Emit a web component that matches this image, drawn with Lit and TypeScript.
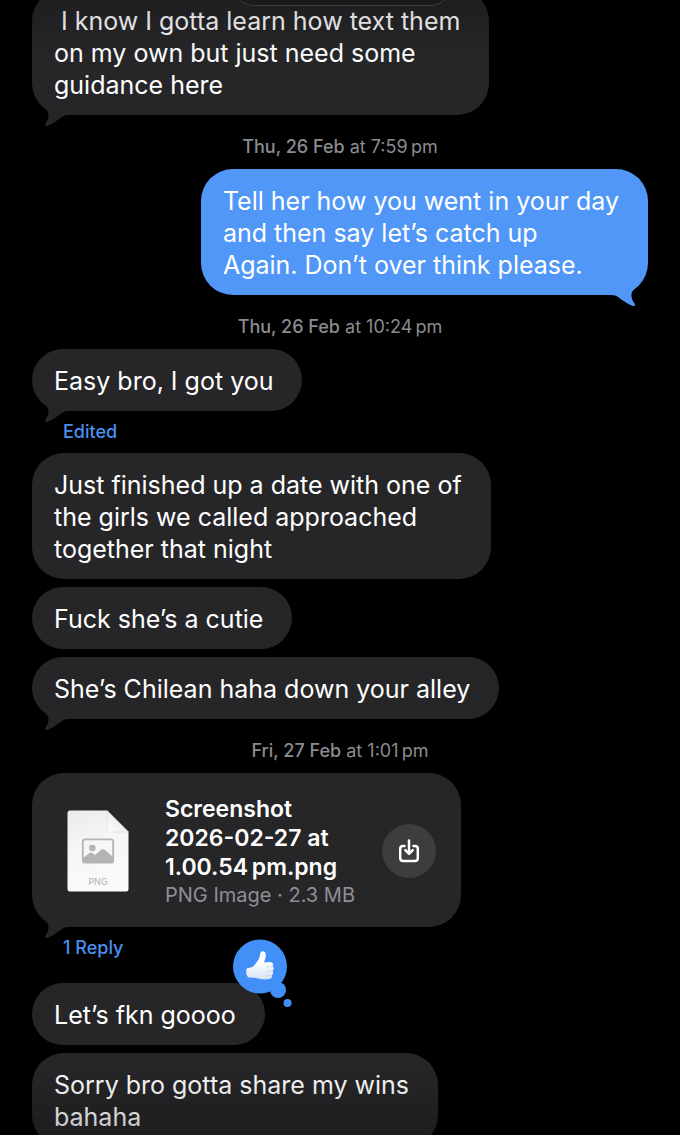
import { LitElement, html, css, svg, nothing } from "lit";
import { customElement, property } from "lit/decorators.js";

type Item =
  | { kind: "date"; day: string; time: string }
  | { kind: "text"; text: string; mine?: boolean; tail?: boolean; liked?: boolean }
  | { kind: "file"; name: string; info: string; tail?: boolean }
  | { kind: "note"; label: string };

const THREAD: Item[] = [
  { kind: "text", text: " I know I gotta learn how text them\non my own but just need some\nguidance here", tail: true },
  { kind: "date", day: "Thu, 26 Feb", time: "at 7:59\u202fpm" },
  { kind: "text", text: "Tell her how you went in your day\nand then say let’s catch up\nAgain. Don’t over think please.", mine: true, tail: true },
  { kind: "date", day: "Thu, 26 Feb", time: "at 10:24\u202fpm" },
  { kind: "text", text: "Easy bro, I got you", tail: true },
  { kind: "note", label: "Edited" },
  { kind: "text", text: "Just finished up a date with one of\nthe girls we called approached\ntogether that night" },
  { kind: "text", text: "Fuck she’s a cutie" },
  { kind: "text", text: "She’s Chilean haha down your alley", tail: true },
  { kind: "date", day: "Fri, 27 Feb", time: "at 1:01\u202fpm" },
  { kind: "file", name: "Screenshot\n2026-02-27 at\n1.00.54\u202fpm.png", info: "PNG Image · 2.3 MB", tail: true },
  { kind: "note", label: "1 Reply" },
  { kind: "text", text: "Let’s fkn goooo", liked: true },
  { kind: "text", text: "Sorry bro gotta share my wins\nbahaha" },
];

@customElement("chat-bubble")
export class ChatBubble extends LitElement {
  @property({ type: Boolean, reflect: true }) mine = false;
  @property({ type: Boolean }) tail = false;
  @property({ type: Boolean, reflect: true }) liked = false;
  @property({ type: Boolean, reflect: true }) file = false;

  static styles = css`
    :host {
      position: relative;
      display: block;
      box-sizing: border-box;
      align-self: flex-start;
      max-width: 80%;
      padding: 16px 29px 14px 22px;
      border-radius: 32px;
      background: var(--bubble);
      color: #fff;
      --bubble: #262629;
    }
    :host([mine]) {
      align-self: flex-end;
      --bubble: #5097f8;
    }
    :host([liked]) {
      margin-top: 14px;
    }
    :host([file]) {
      padding: 20px 25px 18px 35px;
    }
    .tail {
      position: absolute;
      left: 0;
      bottom: -12px;
      width: 40px;
      height: 24px;
      fill: var(--bubble);
    }
    :host([mine]) .tail {
      left: auto;
      right: 0;
      transform: scaleX(-1);
    }
    .reaction {
      position: absolute;
      right: -28px;
      top: -44px;
      width: 60px;
      height: 70px;
      padding: 0;
      border: 0;
      background: none;
    }
  `;

  render() {
    return html`
      ${this.tail
        ? html`<svg class="tail" viewBox="0 -12 40 24" aria-hidden="true">
            <path d="M11 -9C14 -5 17 -4 16.500 1C16 5 15 6.500 13.300 8.800C12.400 10.300 13 11.300 15 10.900C22 9 27 3.500 32 0.800Q34 0 37 0L30 -8Z" />
          </svg>`
        : nothing}
      <slot></slot>
      ${this.liked
        ? html`<button class="reaction" aria-label="Liked">
            <svg width="60" height="70" viewBox="0 0 60 70">
              <defs>
                <linearGradient id="hand" x1="0" y1="0" x2="0" y2="1">
                  <stop offset="0.4" stop-color="#ffffff" />
                  <stop offset="1" stop-color="#d6e2f2" />
                </linearGradient>
              </defs>
              <g fill="#4290f7">
                <circle cx="27" cy="27.500" r="27" />
                <circle cx="45" cy="51" r="8" />
                <circle cx="54.500" cy="64" r="4" />
              </g>
              <path
                fill="url(#hand)"
                d="M14.500 29C18 28.800 19.500 28.500 21.500 26C24 23 26 20.500 26.800 17C27.300 14 27.700 12.200 29.500 12.200C32.500 12.200 33.300 15 32.500 18.500C32 21 31.200 22.300 31.200 23.600C34 23.200 36 23 37.700 23.200C40 23.400 40.800 26 39.500 27.500C41.200 28.700 41 31.300 39.500 32C40.700 33.400 40.300 35.500 38.700 36.200C39.400 37.900 38.500 39.700 36.600 40C33 40.700 28 40.600 24.500 39.300C21.500 38.200 19 39 16.500 38.600C12.500 38 12.600 29.500 14.500 29Z"
              />
              <path
                fill="none"
                stroke="#c3d3e8"
                stroke-width="0.700"
                stroke-linecap="round"
                d="M33.500 27.600C35.500 28 37.500 28 39.500 27.500M33.500 32C35.500 32.500 37.500 32.500 39.500 32M33 36.200C35 36.700 37 36.600 38.700 36.200"
              />
            </svg>
          </button>`
        : nothing}
    `;
  }
}

const documentIcon = svg`
  <svg width="62" height="82" viewBox="0 0 62 82" role="img" aria-label="PNG document">
    <defs>
      <linearGradient id="sheet" x1="0" y1="0" x2="0.3" y2="1">
        <stop offset="0" stop-color="#ebebeb" />
        <stop offset="0.5" stop-color="#f6f6f6" />
        <stop offset="1" stop-color="#fafafa" />
      </linearGradient>
      <linearGradient id="fold" x1="0" y1="1" x2="1" y2="0">
        <stop offset="0" stop-color="#ffffff" />
        <stop offset="0.5" stop-color="#ececec" />
      </linearGradient>
    </defs>
    <path fill="url(#sheet)" d="M3 0.500H40L61.500 22V79Q61.500 81.500 59 81.500H3Q0.500 81.500 0.500 79V3Q0.500 0.500 3 0.500Z" />
    <path fill="url(#fold)" stroke="#dadada" stroke-width="0.600" d="M40 0.500V19.500Q40 22 42.500 22H61.500Z" />
    <rect x="15.800" y="29.300" width="30.400" height="23.400" rx="2.500" fill="none" stroke="#b4b4b6" stroke-width="1.800" />
    <circle cx="25.300" cy="38" r="3.300" fill="#b4b4b6" />
    <path fill="#b4b4b6" d="M16 48L22.500 43Q24 42 25.500 43L28 45L34.500 39.500Q36 38.500 37.500 39.500L46 47V52H16Z" />
    <text class="ext" x="31" y="75" text-anchor="middle">PNG</text>
  </svg>`;

const saveIcon = html`
  <svg width="24" height="26" viewBox="0 0 24 26" fill="none" stroke="#fff" stroke-width="2.500" stroke-linecap="round" stroke-linejoin="round" aria-hidden="true">
    <path d="M7.500 8H6Q3.200 8 3.200 10.800V20Q3.200 23 6.200 23H17.800Q20.800 23 20.800 20V10.800Q20.800 8 18 8H16.500" />
    <path d="M12 2.500V15.500M8.300 12.200L12 15.900L15.700 12.200" />
  </svg>`;

@customElement("app-root")
export class AppRoot extends LitElement {
  static styles = css`
    :host {
      position: relative;
      display: block;
      height: 100vh;
      overflow: hidden;
      background: #000;
      font-family: Inter, "Noto Sans", sans-serif;
      font-size: 25px;
      line-height: 32px;
    }
    .thread {
      display: flex;
      flex-direction: column;
      margin-top: -11px;
      padding: 0 32px;
    }
    .text {
      margin: 0;
      white-space: pre-wrap;
    }
    chat-bubble + chat-bubble {
      margin-top: 8px;
    }
    .date {
      padding: 22px 0 12px;
      text-align: center;
      font-size: 18px;
      line-height: 20px;
      color: #8b8b90;
    }
    .day {
      font-weight: 500;
    }
    .note {
      align-self: flex-start;
      margin: 0;
      padding: 10px 31px;
      border: 0;
      background: none;
      color: #4a90f0;
      font: 500 18px/22px Inter, "Noto Sans", sans-serif;
    }
    .card {
      display: flex;
      align-items: center;
      gap: 27px;
    }
    .meta {
      margin-left: 9px;
      padding-top: 2px;
      white-space: pre-wrap;
    }
    .name {
      margin: 0;
      font-size: 23px;
      line-height: 29px;
      font-weight: 600;
    }
    .info {
      margin: 0;
      font-size: 20px;
      line-height: 27px;
      color: #8f8f95;
    }
    .ext {
      font-size: 9px;
      fill: #b0b0b2;
    }
    .save {
      display: grid;
      place-items: center;
      flex: none;
      width: 54px;
      height: 54px;
      padding: 0;
      border: 0;
      border-radius: 50%;
      background: #3d3d40;
    }
    .shade {
      position: absolute;
      left: 0;
      right: 0;
      pointer-events: none;
    }
    .top {
      top: 0;
      height: 60px;
      background: linear-gradient(rgba(0, 0, 0, 0.2), rgba(0, 0, 0, 0));
    }
    .bottom {
      bottom: 0;
      height: 70px;
      background: linear-gradient(rgba(0, 0, 0, 0), rgba(0, 0, 0, 0.24));
    }
    .pill {
      position: absolute;
      top: -40px;
      left: 50%;
      width: 222px;
      height: 46px;
      margin-left: -109px;
      box-sizing: border-box;
      border: 1px solid #3c3c3f;
      border-radius: 23px;
      background: #1b1b1d;
    }
  `;

  private renderItem(item: Item) {
    switch (item.kind) {
      case "date":
        return html`<div class="date"><span class="day">${item.day}</span> ${item.time}</div>`;
      case "note":
        return html`<button class="note">${item.label}</button>`;
      case "file":
        return html`<chat-bubble file ?tail=${item.tail}>
          <div class="card">
            ${documentIcon}
            <div class="meta"><p class="name">${item.name}</p><p class="info">${item.info}</p></div>
            <button class="save" aria-label="Save">${saveIcon}</button>
          </div>
        </chat-bubble>`;
      default:
        return html`<chat-bubble ?mine=${item.mine} ?tail=${item.tail} ?liked=${item.liked}>
          <p class="text">${item.text}</p>
        </chat-bubble>`;
    }
  }

  render() {
    return html`
      <main class="thread">${THREAD.map((item) => this.renderItem(item))}</main>
      <div class="shade top"></div>
      <div class="shade bottom"></div>
      <div class="pill"></div>
    `;
  }
}
